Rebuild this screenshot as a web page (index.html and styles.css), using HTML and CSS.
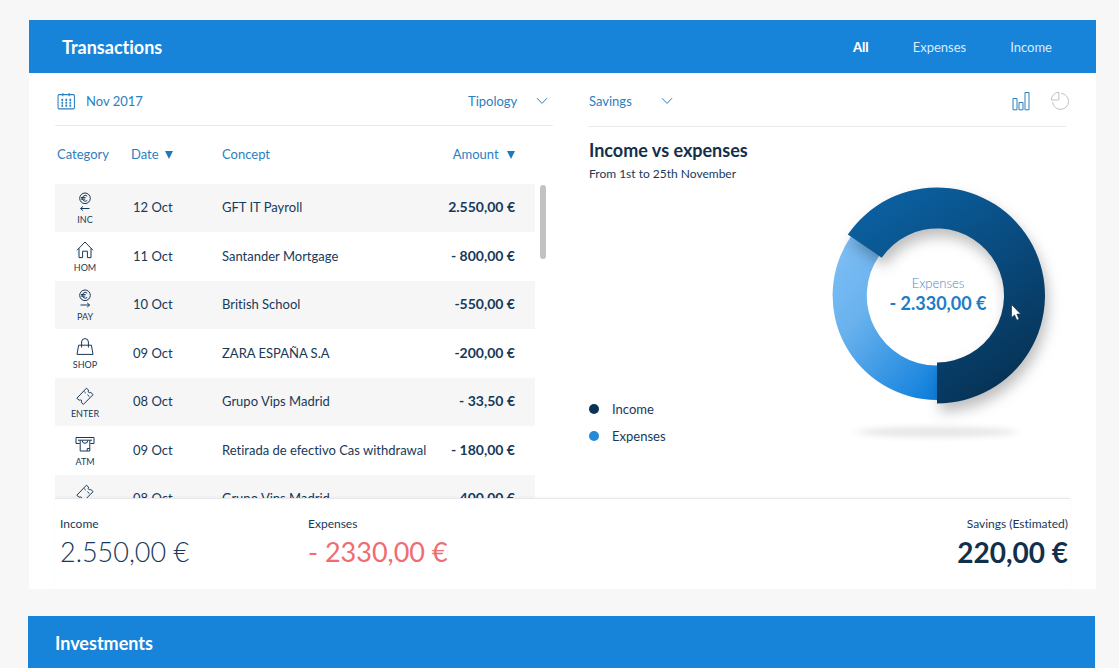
FILE: index.html
```html
<!DOCTYPE html>
<html lang="en">
<head>
<meta charset="utf-8">
<meta name="viewport" content="width=device-width, initial-scale=1">
<title>Transactions</title>
<link rel="stylesheet" href="styles.css">
</head>
<body>
<svg class="sprite" aria-hidden="true">
  <symbol id="chevron" viewBox="0 0 12 8"><path d="M1 1.2 6 6.4 11 1.2"/></symbol>
  <symbol id="euro-coin" viewBox="0 0 20 20">
    <circle cx="10" cy="6.3" r="5.3"/><path d="M12.2 4.1A2.9 2.9 0 1 0 12.2 8.5M6 5.6h4.6M6 7.1h4.2"/>
  </symbol>
  <symbol id="income" viewBox="0 0 20 20"><use href="#euro-coin"/><path d="M14.5 16.5h-9M8 14.4 5.6 16.5 8 18.6"/></symbol>
  <symbol id="pay" viewBox="0 0 20 20"><use href="#euro-coin"/><path d="M5.5 16h9M12.2 13.9l2.4 2.1-2.4 2.1"/></symbol>
  <symbol id="home" viewBox="0 0 20 20"><path d="M2 10.3 10 2l8 8.3M4 8.4V17.6h3.6v-6.4h4.8v6.4H16V8.4"/></symbol>
  <symbol id="shop" viewBox="0 0 20 20"><path d="M3.6 8.2h12.8L18 17.4H2ZM6.6 10.5V5a3.4 3.4 0 0 1 6.8 0v5.5"/></symbol>
  <symbol id="ticket" viewBox="0 0 20 20">
    <path d="M1.8 12.3 11.4 2.2 13.5 4Q12.400 7.300 15.800 6.500L18.100 8.600 8.400 18.400 6.300 16.500Q7.600 13.200 4.200 14.200ZM9.200 5.600l1.600 1.600M12.400 8.700l2 1.900"/>
  </symbol>
  <symbol id="atm" viewBox="0 0 20 20">
    <path d="M4.700 9.500H1V3.500h18v6h-3.700M3 6.200h14M5.200 6.200v10.800h9.600V6.200M7.200 6.500A2.800 2.800 0 0 0 12.800 6.500M12.200 17V14.500h2.500"/>
  </symbol>
</svg>

<main class="page">
  <section class="card">
    <header class="card-header">
      <h1 class="card-title">Transactions</h1>
      <nav class="tabs" aria-label="Filter transactions">
        <button class="tab tab-active" type="button">All</button>
        <button class="tab" type="button">Expenses</button>
        <button class="tab" type="button">Income</button>
      </nav>
    </header>

    <div class="card-body">
      <section class="list-panel">
        <div class="toolbar">
          <button class="month" type="button">
            <svg class="month-icon" viewBox="0 0 18 18" aria-hidden="true">
              <rect x="1" y="2.5" width="15.5" height="13.500" rx="1"/><path d="M5.5 1v3M11.5 1v3"/>
              <path class="dots" d="M4.200 7.5h1.600M8 7.5h1.600M11.800 7.5h1.600M4.200 10.2h1.600M8 10.2h1.600M11.800 10.2h1.600M4.200 12.900h1.600M8 12.900h1.600M11.800 12.900h1.600"/>
            </svg>
            Nov 2017
          </button>
          <div class="dropdown dropdown-type">
            <select class="select" aria-label="Tipology"><option>Tipology</option></select>
            <svg class="chevron" aria-hidden="true"><use href="#chevron"/></svg>
          </div>
        </div>

        <div class="list-view">
          <table class="transactions">
            <thead>
              <tr>
                <th class="col-category" scope="col">Category</th>
                <th class="col-date" scope="col">Date <svg class="sort" viewBox="0 0 8 8" aria-hidden="true"><path d="M0 0h8L4 8z"/></svg></th>
                <th class="col-concept" scope="col">Concept</th>
                <th class="col-amount" scope="col">Amount <svg class="sort" viewBox="0 0 8 8" aria-hidden="true"><path d="M0 0h8L4 8z"/></svg></th>
              </tr>
            </thead>
            <tbody>
              <tr><td class="category"><svg class="icon" aria-hidden="true"><use href="#income"/></svg>INC</td><td class="date">12 Oct</td><td>GFT IT Payroll</td><td class="amount">2.550,00 €</td></tr>
              <tr><td class="category"><svg class="icon" aria-hidden="true"><use href="#home"/></svg>HOM</td><td class="date">11 Oct</td><td>Santander Mortgage</td><td class="amount">- 800,00 €</td></tr>
              <tr><td class="category"><svg class="icon" aria-hidden="true"><use href="#pay"/></svg>PAY</td><td class="date">10 Oct</td><td>British School</td><td class="amount">-550,00 €</td></tr>
              <tr><td class="category"><svg class="icon" aria-hidden="true"><use href="#shop"/></svg>SHOP</td><td class="date">09 Oct</td><td>ZARA ESPAÑA S.A</td><td class="amount">-200,00 €</td></tr>
              <tr><td class="category"><svg class="icon" aria-hidden="true"><use href="#ticket"/></svg>ENTER</td><td class="date">08 Oct</td><td>Grupo Vips Madrid</td><td class="amount">- 33,50 €</td></tr>
              <tr><td class="category"><svg class="icon" aria-hidden="true"><use href="#atm"/></svg>ATM</td><td class="date">09 Oct</td><td>Retirada de efectivo Cas withdrawal</td><td class="amount">- 180,00 €</td></tr>
              <tr><td class="category"><svg class="icon" aria-hidden="true"><use href="#ticket"/></svg></td><td class="date">08 Oct</td><td>Grupo Vips Madrid</td><td class="amount">400,00 €</td></tr>
            </tbody>
          </table>
          <div class="scroll-thumb"></div>
        </div>
      </section>

      <section class="chart-panel">
        <div class="toolbar">
          <div class="dropdown dropdown-savings">
            <select class="select" aria-label="Savings"><option>Savings</option></select>
            <svg class="chevron" aria-hidden="true"><use href="#chevron"/></svg>
          </div>
          <div class="view-switch">
            <button class="view view-active" type="button" aria-label="Bar chart">
              <svg class="view-icon" viewBox="0 0 20 20" aria-hidden="true"><path d="M2 7.5h4v11.3H2ZM8 11.5h4v7.3H8ZM14 1.5h4v17.3h-4Z"/></svg>
            </button>
            <button class="view" type="button" aria-label="Pie chart">
              <svg class="view-icon" viewBox="0 0 20 20" aria-hidden="true"><path d="M1.2 9A8 8 0 0 1 8.8 1.2V9ZM11.2 2.4A8 8 0 1 1 2.6 11.2"/></svg>
            </button>
          </div>
        </div>

        <div class="chart-content">
          <div class="chart-text">
            <div>
              <h2 class="chart-title">Income vs expenses</h2>
              <p class="chart-period">From 1st to 25th November</p>
            </div>
            <ul class="legend">
              <li class="legend-item legend-income">Income</li>
              <li class="legend-item legend-expenses">Expenses</li>
            </ul>
          </div>
          <svg class="donut" viewBox="0 0 240 270" role="img" aria-label="Expenses - 2.330,00 €">
            <defs>
              <linearGradient id="light" x1="0.2" y1="0" x2="0.9" y2="1"><stop offset="0" stop-color="#7cbdf4"/><stop offset=".35" stop-color="#69b2ee"/><stop offset="1" stop-color="#1180dc"/></linearGradient>
              <linearGradient id="dark" x1="0.15" y1="0" x2="0.75" y2="1"><stop offset="0" stop-color="#0b62a4"/><stop offset=".5" stop-color="#094a7d"/><stop offset="1" stop-color="#063153"/></linearGradient>
              <filter id="lift" x="-20%" y="-20%" width="150%" height="150%" color-interpolation-filters="sRGB"><feDropShadow dx="3" dy="8" stdDeviation="7" flood-color="#000" flood-opacity=".26"/></filter>
              <filter id="soft" x="-20%" y="-200%" width="140%" height="500%"><feGaussianBlur stdDeviation="7 3"/></filter>
            </defs>
            <ellipse cx="117" cy="257" rx="80" ry="5" fill="#000" opacity=".1" filter="url(#soft)"/>
            <path d="M117.500 225A104.500 104.500 0 0 1 31 61.300L59.200 80.700A70 70 0 0 0 117.500 190.500Z" fill="url(#light)"/>
            <path d="M117 228.500A108 108 0 1 0 27.800 59.600L61.700 82.700A67 67 0 1 1 117 187.500Z" fill="url(#dark)" filter="url(#lift)"/>
            <text class="donut-label" x="118" y="113">Expenses</text>
            <text class="donut-value" x="118" y="135">- 2.330,00 €</text>
            <path d="M191.500 129.500v13.200l3-2.700 2.300 5.200 2.300-1-2.200-5.100h3.900Z" fill="#fff" stroke="#12304c" stroke-width=".7"/>
          </svg>
        </div>
      </section>
    </div>

    <footer class="summary">
      <dl class="total total-income"><dt>Income</dt><dd>2.550,00 €</dd></dl>
      <dl class="total total-expenses"><dt>Expenses</dt><dd>- 2330,00 €</dd></dl>
      <dl class="total total-savings"><dt>Savings (Estimated)</dt><dd>220,00 €</dd></dl>
    </footer>
  </section>

  <section class="card card-investments">
    <header class="card-header"><h2 class="card-title">Investments</h2></header>
  </section>
</main>
</body>
</html>
```
FILE: styles.css
```css
* { box-sizing: border-box; }

body {
  margin: 0;
  background: #f7f7f7;
  color: #17395a;
  font-family: Lato, "Open Sans", sans-serif;
  font-size: 13px;
  font-variant-ligatures: none;
  line-height: 20px;
  overflow: hidden;
}

h1, h2, p, ul, dl, dd { margin: 0; }

button {
  padding: 0;
  border: 0;
  background: none;
  color: inherit;
  font: inherit;
}

.sprite { position: absolute; width: 0; height: 0; }

.page {
  display: flex;
  flex-direction: column;
  gap: 27px;
  padding: 20px 23px 0 29px;
}

.card { background: #fff; }

.card-header {
  display: flex;
  align-items: center;
  justify-content: space-between;
  height: 53px;
  padding: 0 44px 0 33px;
  background: #1784da;
  color: #fff;
}

.card-title { font-size: 18px; line-height: 24px; font-weight: 700; }

.card-investments { margin: 0 1px 0 -1px; }
.card-investments .card-header { padding-left: 27px; }

.tabs { display: flex; gap: 44px; }
.tab { color: #d8ebfb; }
.tab-active { color: #fff; font-weight: 900; }

.card-body {
  display: grid;
  grid-template-columns: 498fr 478fr;
  gap: 35px;
  padding: 0 30px 0 26px;
}

.toolbar {
  display: flex;
  align-items: center;
  justify-content: space-between;
  height: 53px;
  padding: 4px 5px 0 2px;
  border-bottom: 1px solid #ebebed;
  color: #2b80c0;
}

.month { display: flex; align-items: center; gap: 10px; }
.month-icon { width: 19px; height: 19px; fill: none; stroke: #2b80c0; }
.month-icon .dots { stroke-width: 2; }

.dropdown { position: relative; }
.dropdown-type { width: 80px; }
.dropdown-savings { width: 84px; }
.select {
  width: 100%;
  margin: 0;
  padding: 0;
  border: 0;
  appearance: none;
  background: transparent;
  color: #2b80c0;
  font: inherit;
}
.chevron {
  position: absolute;
  top: 6px;
  right: 0;
  width: 12px;
  height: 8px;
  fill: none;
  stroke: #2b80c0;
  pointer-events: none;
}

.list-view {
  display: flex;
  align-items: flex-start;
  gap: 5px;
  height: 372px;
  padding-right: 7px;
  overflow: hidden;
}

.transactions {
  flex: 1;
  table-layout: fixed;
  border-collapse: collapse;
}
.transactions th {
  height: 58px;
  padding: 0 0 2px;
  color: #2b80c0;
  font-weight: 400;
  text-align: left;
  white-space: nowrap;
}
.transactions td { height: 48px; padding: 0 0 2px; white-space: nowrap; }
.transactions tbody tr:nth-child(even) td { height: 49px; }
.transactions tbody tr:nth-child(odd) { background: #f6f6f6; }
.transactions .col-category { width: 60px; padding-left: 2px; }
.transactions .col-date { width: 107px; padding-left: 16px; }
.transactions .col-amount { width: 103px; padding-right: 20px; text-align: right; }
.transactions .date { padding-left: 18px; }
.transactions .amount { padding-right: 20px; font-size: 14px; font-weight: 700; text-align: right; }
.transactions .category {
  padding: 8px 0 0;
  font-size: 9px;
  line-height: 11px;
  text-align: center;
  vertical-align: top;
}

.sort { width: 8px; height: 8px; margin-left: 3px; fill: #2078bc; }
.col-amount .sort { margin-left: 5px; }

.icon {
  display: block;
  width: 20px;
  height: 20px;
  margin: 0 auto 2px;
  fill: none;
  stroke: #17395a;
}

.scroll-thumb {
  width: 6px;
  height: 74px;
  margin-top: 59px;
  border-radius: 3px;
  background: #c2c2c2;
}

.chart-panel { display: flex; flex-direction: column; }
.chart-panel .toolbar { height: 54px; padding: 3px 0 0 1px; }

.view-switch { display: flex; gap: 19px; margin-right: -4px; }
.view { display: flex; color: #bfc2c5; }
.view-active { color: #2b80c0; }
.view-icon { width: 20px; height: 20px; fill: none; stroke: currentColor; }

.chart-content { display: flex; justify-content: space-between; flex: 1; }
.chart-text {
  display: flex;
  flex-direction: column;
  justify-content: space-between;
  padding: 11px 0 52px 1px;
}
.chart-title { color: #12304c; font-size: 18px; line-height: 24px; font-weight: 700; }
.chart-period { margin-top: 2px; font-size: 12px; }

.legend { display: grid; gap: 7px; padding: 0; list-style: none; }
.legend-item { display: flex; align-items: center; gap: 13px; }
.legend-item::before { width: 10px; height: 10px; border-radius: 50%; content: ""; }
.legend-income::before { background: #0a3357; }
.legend-expenses::before { background: #2489d6; }

.donut { width: 240px; height: 270px; margin: 48px 6px 0 0; overflow: visible; }
.donut-label { fill: #3d8dce; font-size: 13px; font-weight: 300; text-anchor: middle; }
.donut-value { fill: #1c7cc8; font-size: 18px; font-weight: 700; text-anchor: middle; }

.summary {
  position: relative;
  display: flex;
  margin: 0 26px;
  padding: 15px 2px 19px 5px;
  border-top: 1px solid #e8e9ea;
  background: #fff;
  box-shadow: 0 -1px 3px #0000000a;
}
.total dt { font-size: 12px; line-height: 20px; }
.total dd { font-size: 27px; line-height: 36px; }
.total-income { flex: 0 0 248px; }
.total-income dd { font-weight: 300; }
.total-expenses dd { color: #ef6c70; }
.total-savings { margin-left: auto; text-align: right; }
.total-savings dd { color: #12304c; font-size: 28px; font-weight: 700; }
```
